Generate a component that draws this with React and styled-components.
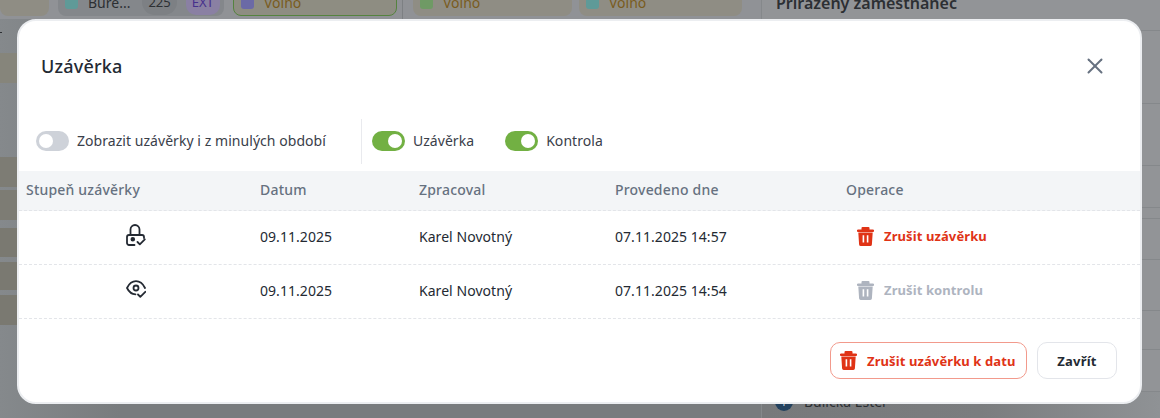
import styled, { createGlobalStyle } from "styled-components";
import { X } from "lucide-react";

const GlobalStyle = createGlobalStyle`
  html, body { margin: 0; padding: 0; }
  body { font-family: "Noto Sans", sans-serif; color: #242a33; }
`;

const rows = [
  { kind: "lock", date: "09.11.2025", who: "Karel Novotný", done: "07.11.2025 14:57", label: "Zrušit uzávěrku", active: true },
  { kind: "eye", date: "09.11.2025", who: "Karel Novotný", done: "07.11.2025 14:54", label: "Zrušit kontrolu", active: false },
];

// visible strip of the page left of the modal
const railBands = [
  { top: 34, h: 30, c: "#86857b" },
  { top: 74, h: 30, c: "#7d7c74" },
  { top: 3, h: 30, c: "#7d7c74" },
  { top: 8, h: 29, c: "#7a7971" },
  { top: 5, h: 28, c: "#7a7971" },
  { top: 5, h: 30, c: "#7a7971" },
];

const sideRows = [14, 73, 61, 42, 10, 40, 50, 39, 41];

function Trash() {
  return (
    <svg width="17" height="19" viewBox="0 0 17 19" fill="currentColor">
      <path d="M5.500 0h6a1 1 0 0 1 1 1v1.500H16a1.200 1.200 0 0 1 0 2.500H1a1.200 1.200 0 0 1 0-2.500h3.500V1a1 1 0 0 1 1-1z" />
      <path fillRule="evenodd" d="M1.300 5.600h14.400l-.8 11.900a1.600 1.600 0 0 1-1.600 1.500H3.700a1.600 1.600 0 0 1-1.600-1.500zM5.600 8.200v7.300h1.600V8.200zm4.200 0v7.300h1.600V8.200z" />
    </svg>
  );
}

function LockCheck() {
  return (
    <svg width="20" height="22" viewBox="0 0 20 22" fill="none" stroke="#242a33" strokeWidth="1.800" strokeLinecap="round" strokeLinejoin="round">
      <path d="M4.500 10.500V5.500a4.500 4.500 0 0 1 9 0v5" />
      <path d="M8.500 21H3a2 2 0 0 1-2-2v-6a2 2 0 0 1 2-2h13a2 2 0 0 1 2 2v1" />
      <circle cx="6.800" cy="15.200" r="1.400" fill="#242a33" />
      <path d="M11.500 18l2.300 2.300 5-5" />
    </svg>
  );
}

function EyeCheck() {
  return (
    <svg width="20" height="18" viewBox="0 0 20 18" fill="none" stroke="#242a33" strokeWidth="1.800" strokeLinecap="round" strokeLinejoin="round">
      <path d="M9.500 14.300C5.500 14.200 3 12 1 8c2-4 4.800-6.800 9-6.800s7 2.800 9 6.800" />
      <circle cx="10" cy="8" r="2.500" />
      <path d="M12 14.500l2.300 2.300 5-5" />
    </svg>
  );
}

export default function App() {
  return (
    <Page>
      <GlobalStyle />
      <Behind>
        <BehindMain>
          <ChipRow>
            <Chip $w={49} $ml={0} />
            <GroupChip>
              <Dot $c="#5f9a98" />
              <ChipName>Bure...</ChipName>
              <CountPill>225</CountPill>
              <ExtPill>EXT</ExtPill>
            </GroupChip>
            <Chip $w={164} $ml={9} $outlined><Dot $c="#6b6aa6" /><ChipText>Volno</ChipText></Chip>
            <ColumnLine />
            <Chip $w={159} $ml={10}><Dot $c="#6f9a65" /><ChipText>Volno</ChipText></Chip>
            <Chip $w={163} $ml={7}><Dot $c="#5f9a98" /><ChipText>Volno</ChipText></Chip>
          </ChipRow>
          <Rail>
            <Tick />
            {railBands.map((b, i) => (
              <RailBand key={i} $top={b.top} $h={b.h} $c={b.c} />
            ))}
          </Rail>
        </BehindMain>
        <BehindSide>
          <SideTitle>Přiřazený zaměstnanec</SideTitle>
          {sideRows.map((h, i) => (
            <SideRow key={i} $h={h} />
          ))}
          <SidePerson>
            <Avatar>i</Avatar>
            <PersonName>Bulíčka Ester</PersonName>
          </SidePerson>
        </BehindSide>
      </Behind>

      <Modal>
        <Header>
          <Title>Uzávěrka</Title>
          <CloseButton aria-label="Zavřít"><X size={26} strokeWidth={1.8} /></CloseButton>
        </Header>

        <Filters>
          <FilterGroup>
            <Toggle />
            <ToggleLabel>Zobrazit uzávěrky i z minulých období</ToggleLabel>
          </FilterGroup>
          <Divider />
          <FilterGroup>
            <Toggle $on />
            <ToggleLabel>Uzávěrka</ToggleLabel>
          </FilterGroup>
          <FilterGroup>
            <Toggle $on />
            <ToggleLabel>Kontrola</ToggleLabel>
          </FilterGroup>
        </Filters>

        <Table>
          <HeadRow>
            <HeadCell>Stupeň uzávěrky</HeadCell>
            <HeadCell>Datum</HeadCell>
            <HeadCell>Zpracoval</HeadCell>
            <HeadCell>Provedeno dne</HeadCell>
            <HeadCell>Operace</HeadCell>
          </HeadRow>
          {rows.map((r) => (
            <Row key={r.done}>
              <IconCell>{r.kind === "lock" ? <LockCheck /> : <EyeCheck />}</IconCell>
              <Cell>{r.date}</Cell>
              <Cell>{r.who}</Cell>
              <Cell>{r.done}</Cell>
              <Cell>
                <RowAction $active={r.active}><Trash />{r.label}</RowAction>
              </Cell>
            </Row>
          ))}
        </Table>

        <Footer>
          <DangerButton><Trash />Zrušit uzávěrku k datu</DangerButton>
          <PlainButton>Zavřít</PlainButton>
        </Footer>
      </Modal>
    </Page>
  );
}

const Page = styled.div`
  position: relative;
  width: 1160px;
  height: 418px;
  overflow: hidden;
  background: #7a7d7f;
`;

const Behind = styled.div`
  display: flex;
  height: 100%;
`;

const BehindMain = styled.div`
  width: 761px;
  display: flex;
  flex-direction: column;
  background: linear-gradient(90deg, #85898c 0, #797c7e 120px, #797c7e 100%);
`;

const ChipRow = styled.div`
  display: flex;
  align-items: flex-end;
  height: 16px;
  padding-bottom: 3px;
  overflow: hidden;
  background: #909296;
`;

const Chip = styled.div`
  flex: none;
  display: flex;
  align-items: center;
  gap: 10px;
  width: ${(p) => p.$w}px;
  height: 28px;
  margin-left: ${(p) => p.$ml}px;
  padding: 0 7px;
  box-sizing: border-box;
  border-radius: 8px;
  background: #8f8d84;
  ${(p) => (p.$outlined ? "background: #8e8d82; border: 1px solid #55833f;" : "")}
`;

const GroupChip = styled(Chip)`
  width: 166px;
  margin-left: 9px;
  gap: 0;
  background: #84878b;
`;

const Dot = styled.span`
  flex: none;
  width: 13px;
  height: 13px;
  border-radius: 3px;
  background: ${(p) => p.$c};
`;

const ChipText = styled.span`
  font-size: 14px;
  color: #7a5c1e;
`;

const ChipName = styled.span`
  margin-left: 10px;
  font-size: 14px;
  color: #2c2f33;
`;

const CountPill = styled.span`
  margin-left: 12px;
  padding: 0 6px;
  height: 26px;
  line-height: 26px;
  border-radius: 13px;
  font-size: 13px;
  color: #2c2f33;
  background: #7d8084;
`;

const ExtPill = styled.span`
  margin-left: 9px;
  padding: 0 6px;
  height: 26px;
  line-height: 26px;
  border-radius: 10px;
  font-size: 13px;
  color: #47318c;
  background: #8a80a3;
`;

const ColumnLine = styled.span`
  flex: none;
  align-self: stretch;
  width: 1px;
  margin: -3px 0 -3px 5px;
  background: #7d8083;
`;

const Rail = styled.div`
  position: relative;
  width: 17px;
  display: flex;
  flex-direction: column;
`;

const Tick = styled.span`
  position: absolute;
  left: 0;
  top: 13px;
  width: 2px;
  height: 1px;
  background: #2c2f33;
`;

const RailBand = styled.div`
  flex: none;
  height: ${(p) => p.$h}px;
  margin-top: ${(p) => p.$top}px;
  background: ${(p) => p.$c};
`;

const BehindSide = styled.div`
  width: 399px;
  display: flex;
  flex-direction: column;
  box-sizing: border-box;
  background: #929497;
  border-left: 1px solid #85888b;
`;

const SideTitle = styled.div`
  height: 16px;
  padding-left: 14px;
  overflow: hidden;
  font-size: 16px;
  font-weight: 600;
  line-height: 6px;
  color: #2c2f33;
`;

const SideRow = styled.div`
  height: ${(p) => p.$h}px;
  border-bottom: 1px solid #85888b;
`;

const SidePerson = styled.div`
  flex: 1;
  display: flex;
  align-items: center;
  gap: 11px;
  padding: 0 0 7px 13px;
  background: linear-gradient(90deg, #77797b 0, #7b7d7f 55%, #8f9295 100%);
`;

const Avatar = styled.span`
  width: 18px;
  height: 18px;
  border-radius: 50%;
  background: #23425f;
  color: #c9d2dc;
  font-size: 11px;
  text-align: center;
  line-height: 18px;
`;

const PersonName = styled.span`
  font-size: 14px;
  color: #2c2f33;
`;

const Modal = styled.div`
  position: absolute;
  left: 17px;
  top: 19px;
  width: 1125px;
  height: 385px;
  box-sizing: border-box;
  display: flex;
  flex-direction: column;
  background: #fff;
  border: 2px solid #eceef1;
  border-radius: 19px;
`;

const Header = styled.div`
  display: flex;
  align-items: center;
  justify-content: space-between;
  height: 91px;
  padding: 0 32px 1px 22px;
  box-sizing: border-box;
`;

const Title = styled.h2`
  margin: 0;
  font-size: 18px;
  font-weight: 500;
  letter-spacing: 0.2px;
  color: #242a33;
`;

const CloseButton = styled.button`
  display: flex;
  padding: 0;
  border: 0;
  background: none;
  color: #667180;
`;

const Filters = styled.div`
  display: flex;
  align-items: center;
  gap: 31px;
  height: 59px;
  padding: 0 0 1px 17px;
  box-sizing: border-box;
`;

const FilterGroup = styled.div`
  display: flex;
  align-items: center;
  gap: 8px;
`;

const Toggle = styled.span`
  position: relative;
  display: block;
  width: 33px;
  height: 20px;
  border-radius: 10px;
  background: ${(p) => (p.$on ? "#72b043" : "#ced2d9")};
  &::after {
    content: "";
    position: absolute;
    top: 3px;
    left: ${(p) => (p.$on ? "16px" : "3px")};
    width: 14px;
    height: 14px;
    border-radius: 50%;
    background: #fff;
  }
`;

const ToggleLabel = styled.span`
  margin-bottom: 2px;
  font-size: 14px;
  letter-spacing: 0.05px;
  color: #3a404a;
`;

const Divider = styled.span`
  width: 1px;
  height: 45px;
  background: #e9eaee;
  margin: 0 -21px 0 4px;
`;

const columns = "234px 159px 196px 231px 1fr";

const Table = styled.div`
  display: flex;
  flex-direction: column;
`;

const HeadRow = styled.div`
  display: grid;
  grid-template-columns: ${columns};
  height: 40px;
  padding-bottom: 3px;
  box-sizing: border-box;
  align-items: center;
  background: #f3f5f7;
  border-bottom: 1px dashed #e3e5e9;
`;

const HeadCell = styled.div`
  padding-left: 7px;
  font-size: 14px;
  font-weight: 500;
  letter-spacing: 0.2px;
  color: #667180;
`;

const Row = styled.div`
  display: grid;
  grid-template-columns: ${columns};
  height: 54px;
  padding-bottom: 2px;
  box-sizing: border-box;
  align-items: center;
  border-bottom: 1px dashed #e3e5e9;
`;

const Cell = styled.div`
  padding-left: 7px;
  font-size: 14px;
  letter-spacing: 0.05px;
  color: #242a33;
`;

const IconCell = styled.div`
  display: flex;
  justify-content: center;
  padding-bottom: 4px;
`;

const RowAction = styled.span`
  display: inline-flex;
  align-items: center;
  gap: 10px;
  margin-left: 11px;
  padding-top: 3px;
  font-size: 13px;
  font-weight: 700;
  letter-spacing: 0.1px;
  color: ${(p) => (p.$active ? "#e03316" : "#aeb4bf")};
`;

const Footer = styled.div`
  flex: 1;
  display: flex;
  align-items: center;
  justify-content: flex-end;
  gap: 10px;
  padding-right: 23px;
`;

const DangerButton = styled.button`
  display: flex;
  align-items: center;
  gap: 10px;
  width: 197px;
  height: 37px;
  padding: 0 0 0 9px;
  border: 1px solid #f29a8c;
  border-radius: 10px;
  background: #fff;
  font: 700 13px "Noto Sans", sans-serif;
  letter-spacing: 0.1px;
  color: #e03316;
`;

const PlainButton = styled.button`
  height: 37px;
  width: 80px;
  border: 1px solid #e3e5ea;
  border-radius: 10px;
  background: #fff;
  font: 700 13px "Noto Sans", sans-serif;
  letter-spacing: 0.2px;
  color: #242a33;
`;
